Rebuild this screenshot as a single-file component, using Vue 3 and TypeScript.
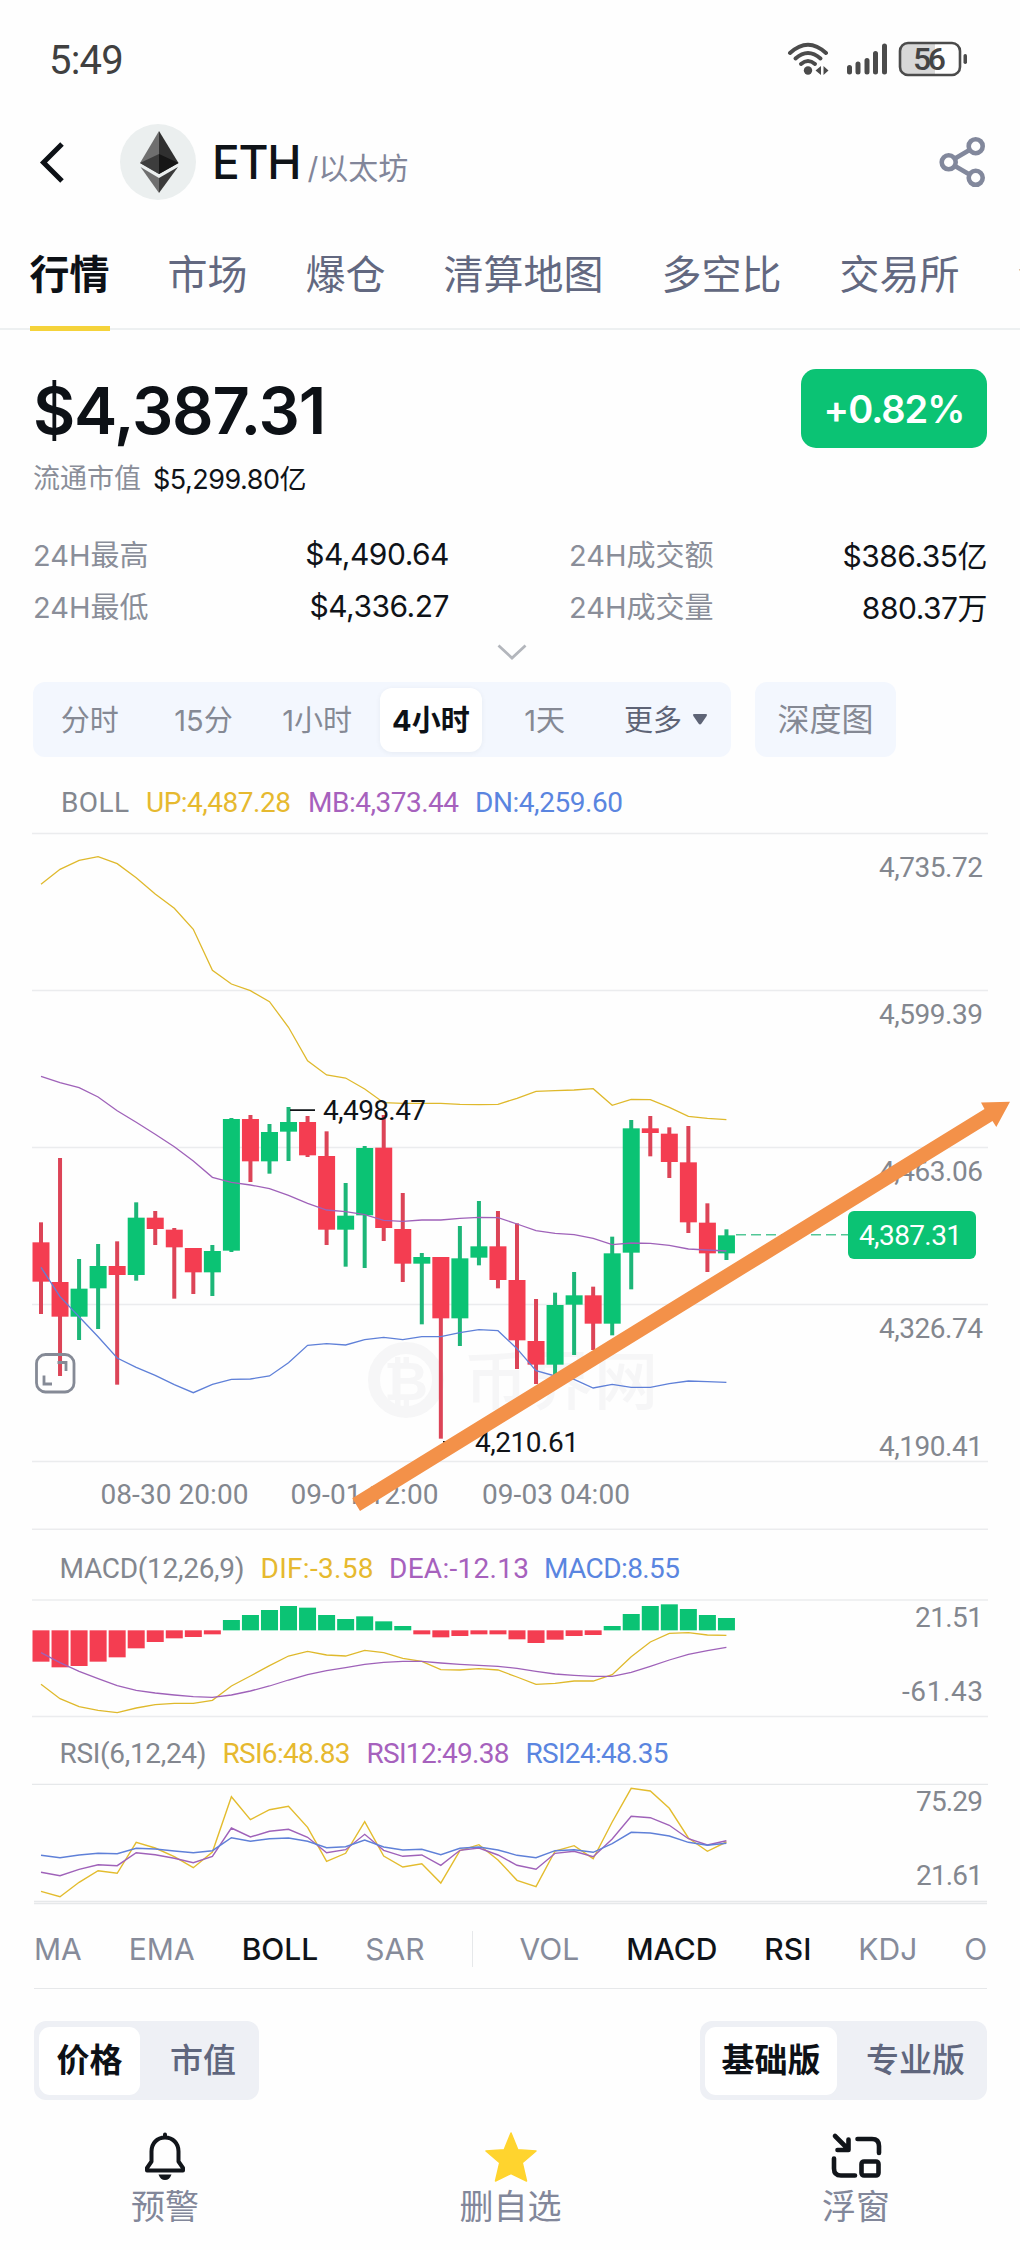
<script setup lang="ts">
type Candle = [up: 0 | 1, bodyTop: number, bodyBottom: number, high: number, low: number]
interface Label { text: string; x: number; y: number; w: number; color?: string }

const tabs: string[] = ['行情', '市场', '爆仓', '清算地图', '多空比', '交易所', '合约']
const periods: string[] = ['分时', '15分', '1小时', '4小时', '1天']

const GREY = '#83878f'
const GOLD = '#e6b92f'
const PURPLE = '#a661bd'
const BLUE = '#5a85e0'

// Candle columns are evenly spaced; vertical values are in thirds of a pixel.
const cx = (i: number): number => 41 + i * 19.04
const scale = (origin: number) => (v: number): number => origin + v / 3
const py = scale(1060)
const my = scale(1440)
const ry = scale(1720)

const candles: Candle[] = [
  [0, 547, 665, 487, 762], [0, 666, 770, 294, 948], [1, 686, 770, 597, 840], [1, 618, 685, 552, 807],
  [0, 618, 645, 544, 974], [1, 473, 645, 427, 662], [0, 473, 507, 453, 555], [0, 509, 562, 504, 716],
  [0, 564, 637, 564, 702], [1, 573, 637, 555, 708], [1, 177, 572, 174, 576], [0, 177, 304, 165, 366],
  [1, 216, 304, 192, 341], [1, 186, 215, 141, 303], [0, 186, 286, 168, 291], [0, 288, 509, 214, 555],
  [1, 467, 509, 369, 620], [1, 264, 466, 258, 624], [0, 263, 504, 165, 543], [0, 507, 611, 399, 666],
  [1, 591, 611, 579, 793], [0, 591, 775, 591, 1136], [1, 595, 775, 498, 858], [1, 559, 593, 423, 616],
  [0, 559, 660, 453, 685], [0, 660, 841, 490, 927], [0, 843, 914, 717, 972], [1, 735, 914, 698, 945],
  [1, 706, 734, 636, 885], [0, 706, 791, 680, 870], [1, 580, 791, 530, 826], [1, 205, 578, 180, 688],
  [0, 205, 219, 168, 289], [0, 221, 306, 202, 354], [0, 307, 487, 198, 519], [0, 488, 580, 430, 636],
  [1, 526, 580, 508, 600],
]

const bollUp = [-527, -572, -599, -610, -589, -547, -498, -455, -392, -269, -228, -208, -175, -98, 2, 45, 54, 87, 128, 130, 130, 130, 133, 134, 133, 115, 94, 92, 90, 86, 136, 118, 119, 142, 169, 175, 179]
const bollMid = [49, 68, 83, 111, 152, 187, 223, 260, 303, 352, 367, 375, 386, 406, 430, 450, 455, 464, 481, 484, 480, 480, 475, 472, 473, 492, 512, 520, 524, 535, 554, 549, 550, 556, 567, 570, 573]
const bollDown = [622, 710, 770, 830, 894, 922, 946, 974, 998, 973, 958, 957, 948, 908, 856, 851, 855, 839, 832, 839, 830, 830, 818, 809, 812, 866, 932, 948, 958, 984, 973, 982, 982, 971, 963, 965, 967]

const ZERO = 571
const bars = [665, 682, 678, 665, 652, 625, 606, 595, 591, 583, 540, 525, 510, 498, 503, 525, 537, 529, 544, 558, 583, 592, 588, 583, 583, 598, 609, 599, 588, 585, 558, 522, 498, 493, 507, 525, 534]
const dif = [733, 776, 800, 811, 818, 804, 794, 790, 790, 781, 738, 708, 677, 648, 634, 645, 648, 631, 638, 655, 664, 689, 690, 686, 690, 711, 733, 730, 723, 723, 704, 650, 606, 580, 578, 585, 586]
const dea = [638, 668, 694, 716, 737, 751, 759, 765, 770, 772, 765, 753, 738, 720, 704, 692, 683, 673, 667, 664, 664, 669, 673, 676, 679, 685, 694, 702, 706, 709, 709, 697, 679, 660, 643, 632, 622]

const rsi6 = [514, 530, 487, 452, 460, 367, 384, 410, 443, 396, 230, 299, 269, 259, 322, 424, 400, 305, 408, 441, 431, 489, 392, 374, 420, 481, 500, 393, 377, 416, 306, 205, 213, 265, 354, 394, 366]
const rsi12 = [457, 467, 448, 434, 437, 398, 404, 415, 428, 409, 324, 351, 334, 328, 352, 398, 389, 343, 391, 409, 405, 436, 391, 384, 405, 436, 448, 400, 394, 410, 357, 289, 293, 316, 356, 375, 362]
const rsi24 = [406, 413, 405, 400, 401, 385, 387, 393, 398, 392, 353, 364, 356, 354, 364, 383, 380, 360, 381, 390, 388, 404, 385, 381, 390, 406, 413, 392, 389, 397, 371, 337, 339, 348, 367, 376, 370]

const line = (values: number[], y: (v: number) => number): string =>
  values.map((v, i) => `${cx(i).toFixed(1)},${y(v).toFixed(1)}`).join(' ')

const gridY = [833.5, 990.5, 1147.5, 1304.5, 1461.5]

const mainLabels: Label[] = [
  { text: 'BOLL', x: 61, y: 812.3, w: 68 },
  { text: 'UP:4,487.28', x: 146, y: 812.3, w: 145, color: GOLD },
  { text: 'MB:4,373.44', x: 308, y: 812.3, w: 151, color: PURPLE },
  { text: 'DN:4,259.60', x: 475, y: 812.3, w: 148, color: BLUE },
  { text: '4,735.72', x: 879, y: 877, w: 104 },
  { text: '4,599.39', x: 879, y: 1024, w: 104 },
  { text: '4,463.06', x: 879, y: 1181, w: 104 },
  { text: '4,326.74', x: 879, y: 1338, w: 104 },
  { text: '4,190.41', x: 879, y: 1456, w: 104 },
  { text: '4,498.47', x: 323, y: 1120, w: 103, color: '#111418' },
  { text: '4,210.61', x: 475, y: 1451.7, w: 104, color: '#111418' },
  { text: '08-30 20:00', x: 100.5, y: 1503.7, w: 148 },
  { text: '09-01 12:00', x: 290.5, y: 1503.7, w: 148 },
  { text: '09-03 04:00', x: 482, y: 1503.7, w: 148 },
]
const macdLabels: Label[] = [
  { text: 'MACD(12,26,9)', x: 59.5, y: 1577.7, w: 185 },
  { text: 'DIF:-3.58', x: 260.5, y: 1577.7, w: 113, color: GOLD },
  { text: 'DEA:-12.13', x: 389, y: 1577.7, w: 140, color: PURPLE },
  { text: 'MACD:8.55', x: 544, y: 1577.7, w: 136, color: BLUE },
  { text: '21.51', x: 915, y: 1627, w: 68 },
  { text: '-61.43', x: 902, y: 1701, w: 81 },
]
const rsiLabels: Label[] = [
  { text: 'RSI(6,12,24)', x: 59.5, y: 1762.7, w: 147 },
  { text: 'RSI6:48.83', x: 222.5, y: 1762.7, w: 128, color: GOLD },
  { text: 'RSI12:49.38', x: 366.5, y: 1762.7, w: 143, color: PURPLE },
  { text: 'RSI24:48.35', x: 525.5, y: 1762.7, w: 143, color: BLUE },
  { text: '75.29', x: 916, y: 1810.7, w: 67 },
  { text: '21.61', x: 916, y: 1885, w: 67 },
]
</script>

<template>
  <div class="screen">
    <header class="status">
      <span class="clock">5:49</span>
      <svg width="190" height="40" viewBox="780 38 190 40">
        <g fill="none" stroke="#4b4b4b" stroke-width="4" stroke-linecap="round">
          <path d="M790 53 Q808 36.500 826 53" />
          <path d="M795.500 58.500 Q808 47.500 820.500 58.500" />
          <path d="M801 64 Q808 58 815 64" />
        </g>
        <circle cx="808" cy="70.500" r="4.200" fill="#4b4b4b" />
        <path d="M821 66v9l-5.500-4.500zM823.500 66v9l5-4.500z" fill="#4b4b4b" />
        <g stroke="#4b4b4b" stroke-width="5" stroke-linecap="round">
          <path d="M849.500 67.500v4.500M858 64v8M867 60.500v11.500M875.500 53.500v18.500M884.500 46v26" />
        </g>
        <path d="M908 43.500h27v31h-27a7 7 0 0 1-7-7v-17a7 7 0 0 1 7-7z" fill="#d8d8d8" />
        <rect x="900" y="43" width="60" height="32" rx="8" fill="none" stroke="#4b4b4b" stroke-width="2.600" />
        <rect x="963.500" y="54" width="3.500" height="10" rx="1.700" fill="#4b4b4b" />
        <text x="913" y="70" class="level" textLength="33">56</text>
      </svg>
    </header>

    <div class="title">
      <svg class="back" width="30" height="48" viewBox="38 138 30 48">
        <path d="M62 144 43.500 162.500 62 181" fill="none" stroke="#0d1116" stroke-width="5" />
      </svg>
      <svg class="logo" width="76" height="76" viewBox="0 0 76 76">
        <circle cx="38" cy="38" r="38" fill="#ebefef" />
        <path d="M39 7 20 39 39 50z" fill="#6f6f6f" />
        <path d="M39 7 58.500 39 39 50z" fill="#303030" />
        <path d="M39 30 20 39 39 50z" fill="#3d3d3d" />
        <path d="M39 30 58.500 39 39 50z" fill="#161616" />
        <path d="M20.500 43 39 54v15z" fill="#6f6f6f" />
        <path d="M58 43 39 54v15z" fill="#3b3b3b" />
      </svg>
      <span class="symbol">ETH</span>
      <span class="name">/以太坊</span>
      <svg class="share" width="50" height="52" viewBox="936 136 50 52">
        <g fill="none" stroke="#82889c" stroke-width="4.600">
          <path d="M954 158.500 968.500 150M954 166 968.500 174.500" />
          <circle cx="947.700" cy="162.300" r="7" />
          <circle cx="974.700" cy="146.200" r="7" />
          <circle cx="974.700" cy="177.800" r="7" />
        </g>
      </svg>
    </div>

    <nav class="tabs">
      <span v-for="(tab, i) in tabs" :key="tab" class="tab" :class="{ on: i === 0 }">{{ tab }}</span>
    </nav>

    <section class="quote">
      <div class="price">$4,387.31</div>
      <div class="change">+0.82%</div>
    </section>
    <div class="cap"><span class="cap-label">流通市值</span><span class="cap-value">$5,299.80亿</span></div>

    <section class="stats">
      <div class="pair"><span>24H最高</span><b>$4,490.64</b></div>
      <div class="pair"><span>24H成交额</span><b>$386.35亿</b></div>
      <div class="pair"><span>24H最低</span><b>$4,336.27</b></div>
      <div class="pair"><span>24H成交量</span><b>880.37万</b></div>
    </section>
    <div class="more">
      <svg width="34" height="20" viewBox="0 0 34 20">
        <path d="M3.500 3.500 17 16 30.500 3.500" fill="none" stroke="#b3b6bc" stroke-width="2.800" />
      </svg>
    </div>

    <section class="toolbar">
      <div class="periods">
        <span v-for="p in periods" :key="p" class="period"><i :class="{ on: p === '4小时' }">{{ p }}</i></span>
        <span class="period last"><em>更多</em>
          <svg width="16" height="11" viewBox="0 0 16 11"><path d="M2.500 0h11q2.500 0 1 2.200l-5 7.300q-1.500 2-3 0l-5-7.300q-1.500-2.200 1-2.200z" fill="#5e6476" /></svg>
        </span>
      </div>
      <div class="depth">深度图</div>
    </section>

    <svg class="chart" width="1020" height="760" viewBox="0 770 1020 760">
      <g stroke="#ebecee" stroke-width="1.500">
        <line v-for="y in gridY" :key="y" x1="32" x2="988" :y1="y" :y2="y" />
        <line x1="32" x2="988" y1="1529.200" y2="1529.200" />
      </g>
      <g class="mark">
        <circle cx="406" cy="1380" r="32" fill="none" stroke="#f6f6f7" stroke-width="12" />
        <text x="406" y="1400" font-size="54" font-weight="700" text-anchor="middle" fill="#f6f6f7">₿</text>
        <text x="464" y="1404" font-size="64" font-weight="500" textLength="194" fill="#f6f6f7">币界网</text>
      </g>
      <g v-for="(c, i) in candles" :key="i">
        <rect :x="cx(i) - 2" :y="py(c[3])" width="4" :height="(c[4] - c[3]) / 3" :fill="c[0] ? '#1db678' : '#dc4457'" />
        <rect :x="cx(i) - 8.5" :y="py(c[1])" width="17" :height="(c[2] - c[1]) / 3" :fill="c[0] ? '#0bc374' : '#f43d51'" />
      </g>
      <g fill="none" stroke-width="1.300">
        <polyline :points="line(bollUp, py)" stroke="#dfb92c" />
        <polyline :points="line(bollMid, py)" stroke="#9f62b9" />
        <polyline :points="line(bollDown, py)" stroke="#5f80d8" />
      </g>
      <g fill="none" stroke="#858a96" stroke-width="2.800">
        <rect x="36.500" y="1354.500" width="37.500" height="37.500" rx="9" />
        <path d="M57.500 1362.500h8.500v8.500M52 1384h-8v-8.500" />
      </g>
      <path d="M290 1110.200h25M443 1442h27" stroke="#111418" stroke-width="1.800" />
      <path d="M736 1234.800h112" stroke="#52c796" stroke-width="1.600" stroke-dasharray="10 5" />
      <text v-for="l in mainLabels" :key="l.text" :x="l.x" :y="l.y" :textLength="l.w" :fill="l.color ?? GREY" class="num">{{ l.text }}</text>
      <rect x="848" y="1211" width="128" height="48" rx="6" fill="#0bc374" />
      <text x="859" y="1245" textLength="103" fill="#fff" class="num">4,387.31</text>
      <polygon points="352.3,1498.3 984.5,1109 981,1102.600 1010,1101.700 996.300,1127 992.500,1121 360,1511" fill="#f39149" />
    </svg>

    <svg class="chart" width="1020" height="190" viewBox="0 1530 1020 190">
      <g stroke="#ebecee" stroke-width="1.500">
        <line x1="32" x2="988" y1="1600" y2="1600" />
        <line x1="32" x2="988" y1="1716.500" y2="1716.500" />
      </g>
      <rect v-for="(b, i) in bars" :key="i" :x="cx(i) - 8.5" :y="my(Math.min(b, ZERO))" width="17" :height="Math.abs(b - ZERO) / 3" :fill="b < ZERO ? '#0bc374' : '#f43d51'" />
      <g fill="none" stroke-width="1.300">
        <polyline :points="line(dif, my)" stroke="#dfb92c" />
        <polyline :points="line(dea, my)" stroke="#9f62b9" />
      </g>
      <text v-for="l in macdLabels" :key="l.text" :x="l.x" :y="l.y" :textLength="l.w" :fill="l.color ?? GREY" class="num">{{ l.text }}</text>
    </svg>

    <svg class="chart" width="1020" height="190" viewBox="0 1720 1020 190">
      <g stroke="#e6e8ea" stroke-width="1.300">
        <line x1="32" x2="988" y1="1784.300" y2="1784.300" />
        <line x1="34" x2="987" y1="1901.500" y2="1901.500" />
        <line x1="34" x2="987" y1="1903.500" y2="1903.500" />
      </g>
      <g fill="none" stroke-width="1.400">
        <polyline :points="line(rsi6, ry)" stroke="#e3bc2e" />
        <polyline :points="line(rsi12, ry)" stroke="#9f62b9" />
        <polyline :points="line(rsi24, ry)" stroke="#5f80d8" />
      </g>
      <text v-for="l in rsiLabels" :key="l.text" :x="l.x" :y="l.y" :textLength="l.w" :fill="l.color ?? GREY" class="num">{{ l.text }}</text>
    </svg>

    <nav class="indicators">
      <span>MA</span><span>EMA</span><span class="on">BOLL</span><span>SAR</span>
      <i class="rule"></i>
      <span>VOL</span><span class="on">MACD</span><span class="on">RSI</span><span>KDJ</span><span>O</span>
    </nav>

    <section class="modes">
      <div class="seg"><span class="on">价格</span><span class="off">市值</span></div>
      <div class="seg"><span class="on wide">基础版</span><span class="off wide">专业版</span></div>
    </section>

    <footer class="actions">
      <div class="action">
        <svg width="52" height="52" viewBox="0 0 52 52">
          <path d="M26 4.500v3M26 7.500c8 0 13.500 6 13.500 14v10l4.500 6.500v2.500H8V38l4.500-6.500v-10c0-8 5.500-14 13.500-14z" fill="none" stroke="#11151a" stroke-width="4" stroke-linejoin="round" stroke-linecap="round" />
          <path d="M19.500 44.500h13q-2 5.500-6.500 5.500t-6.500-5.500z" fill="#11151a" />
        </svg>
        <span>预警</span>
      </div>
      <div class="action">
        <svg width="56" height="52" viewBox="0 0 56 52">
          <path d="M28 3 34.800 19.800 53 21 39.300 32.800 43.500 51 28 43.500 12.500 51 16.700 32.800 3 21 21.200 19.800z" fill="#ffd42e" stroke="#ffd42e" stroke-width="1.500" stroke-linejoin="round" />
        </svg>
        <span>删自选</span>
      </div>
      <div class="action">
        <svg width="56" height="52" viewBox="828 2130 56 52">
          <g fill="none" stroke="#11151a" stroke-width="4.600" stroke-linecap="round" stroke-linejoin="round">
            <path d="M835 2136 847.500 2148.500M848.500 2139.500v10.500h-11" />
            <path d="M857.500 2139h14.500q7 0 7 7v7" />
            <path d="M834 2158.500v10q0 7 7 7h14" />
            <rect x="861.500" y="2161.500" width="17" height="14" rx="2.500" />
          </g>
        </svg>
        <span>浮窗</span>
      </div>
    </footer>
  </div>
</template>

<style>
body { background: #fff; }
</style>

<style scoped>
.screen {
  width: 1020px;
  height: 2250px;
  overflow: hidden;
  background: #fefefe;
  color: #0f1318;
  font-family: Inter, "Noto Sans CJK SC", sans-serif;
}
svg { display: block; flex: none; }
.num { font-family: Roboto, sans-serif; font-size: 28px; }
.level { font: 500 32px Roboto, sans-serif; fill: #444; }

.status {
  display: flex;
  justify-content: space-between;
  box-sizing: border-box;
  height: 110px;
  padding: 38px 50px 0 49px;
}
.clock { font: 400 40px/46px Roboto, sans-serif; color: #404040; letter-spacing: -0.8px; }

.title { display: flex; align-items: center; height: 104px; padding: 0 33px 0 38px; }
.logo { margin-left: 52px; }
.symbol { margin-left: 16px; font-size: 46px; font-weight: 500; letter-spacing: -1.2px; }
.name { margin: 8px 0 0 7px; font-size: 30px; color: #82869a; }
.share { margin-left: auto; }

.tabs {
  display: flex;
  gap: 58px;
  box-sizing: border-box;
  height: 116px;
  margin-bottom: 1px;
  padding-left: 29.5px;
  border-bottom: 2px solid #edf0f1;
  white-space: nowrap;
}
.tab {
  flex: none;
  box-sizing: border-box;
  height: 117px;
  padding-top: 31px;
  font-size: 40px;
  line-height: 60px;
  color: #626880;
}
.tab.on { color: #0d1116; font-weight: 700; border-bottom: 5px solid #f5d33a; }

.quote { display: flex; justify-content: space-between; height: 79px; padding: 38px 33px 0; }
.price { font-size: 65px; font-weight: 600; line-height: 83px; letter-spacing: -1.2px; color: #0d1116; }
.change {
  width: 186px;
  height: 79px;
  border-radius: 15px;
  background: #0bc374;
  color: #fff;
  font-size: 38px;
  font-weight: 600;
  line-height: 80px;
  letter-spacing: -1px;
  text-align: center;
}
.cap { display: flex; align-items: center; height: 40px; margin-top: 8px; padding-left: 33px; }
.cap-label { color: #8a8e99; font-size: 27px; }
.cap-value { margin: 3px 0 0 12px; font-size: 27px; letter-spacing: -0.5px; }

.stats {
  display: grid;
  grid-template-columns: 416px 418px;
  column-gap: 120px;
  grid-auto-rows: 52px;
  margin: 31px 33px 0;
}
.pair { display: flex; justify-content: space-between; align-items: center; font-size: 29px; }
.pair span { color: #8a8e99; font-size: 29px; }
.pair b { margin-top: 2px; font-weight: 400; font-size: 30px; letter-spacing: -0.5px; }
.more { display: flex; justify-content: center; height: 40px; margin: 11px 0 0 4px; }

.toolbar { display: flex; gap: 24px; height: 75px; padding-left: 33px; }
.periods { display: flex; width: 698px; border-radius: 12px; background: #f3f7fe; }
.period { width: 113.7px; display: flex; align-items: center; justify-content: center; font-size: 29px; color: #858994; }
.period i {
  display: flex;
  align-items: center;
  justify-content: center;
  box-sizing: border-box;
  width: 102px;
  height: 64px;
  padding-bottom: 3px;
  font-style: normal;
}
.period i.on { background: #fff; border-radius: 12px; color: #0d1116; font-weight: 700; box-shadow: 0 1px 5px rgba(40, 50, 70, .06); }
.period.last { width: 129px; gap: 10px; color: #5e6476; }
.period em { padding-bottom: 3px; font-style: normal; }
.depth { width: 141px; border-radius: 12px; background: #f3f7fe; color: #858994; font-size: 32px; line-height: 76px; text-align: center; }
.toolbar + .chart { margin-top: 13px; }
.mark { font-family: "Noto Sans CJK SC", sans-serif; }

.indicators {
  display: flex;
  align-items: center;
  gap: 47px;
  box-sizing: border-box;
  width: 953px;
  height: 79px;
  margin-left: 34px;
  padding-bottom: 1px;
  border-bottom: 1.5px solid #e6e8ea;
  font-size: 30px;
  color: #868b9a;
}
.indicators span { flex: none; }
.indicators .on { color: #0f1318; font-weight: 500; }
.rule { flex: none; width: 1px; height: 36px; background: #e6e8ea; }

.modes { display: flex; justify-content: space-between; margin: 32px 33px 0 34px; }
.seg { display: flex; align-items: center; box-sizing: border-box; height: 79px; padding: 5px; border-radius: 12px; background: #eef0f5; font-size: 33px; font-weight: 700; }
.seg span { display: flex; align-items: center; justify-content: center; box-sizing: border-box; height: 68px; padding-bottom: 5px; }
.seg .on { width: 101px; background: #fff; border-radius: 11px; color: #0d1116; }
.seg .off { width: 114px; padding-left: 12px; color: #5f667d; font-weight: 500; }
.seg .on.wide { width: 132px; }
.seg .off.wide { width: 145px; }

.actions { display: flex; justify-content: space-between; margin: 30px 115px 0 116px; }
.action { display: flex; flex-direction: column; align-items: center; width: 98px; font-size: 34px; color: #82879a; white-space: nowrap; }
.action span { line-height: 50px; }
</style>
